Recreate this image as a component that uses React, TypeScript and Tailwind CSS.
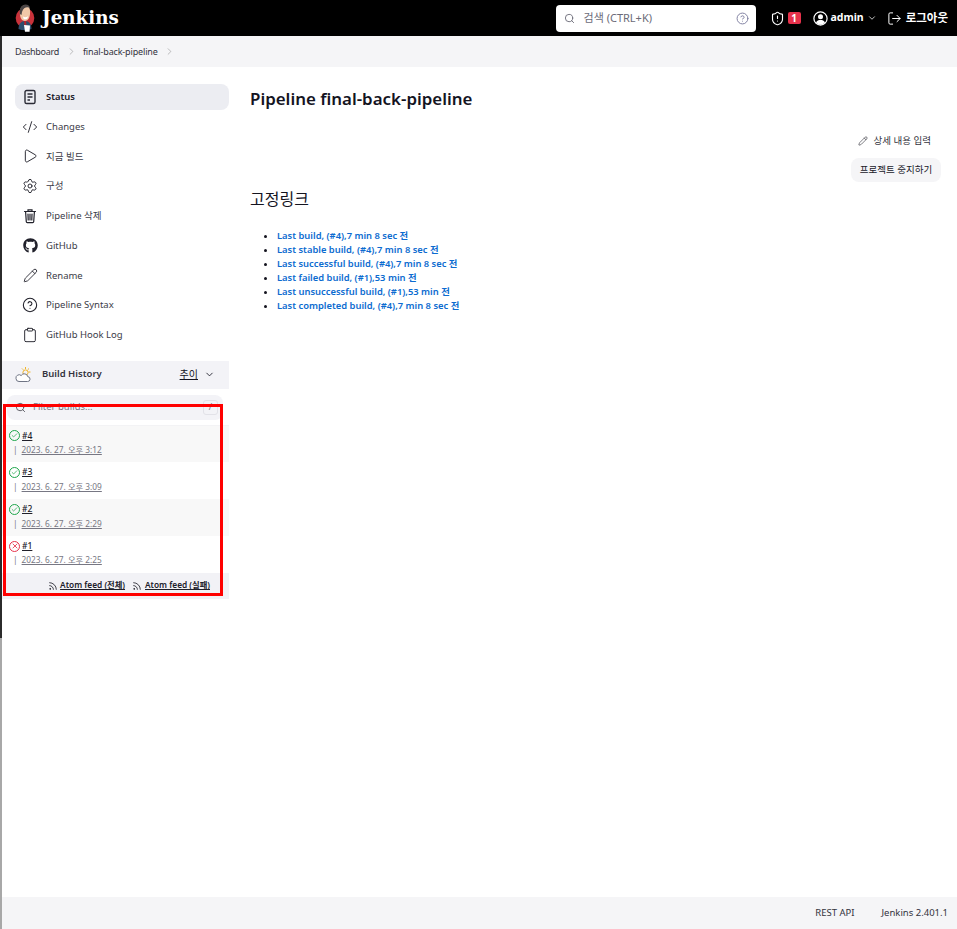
import React from "react";
import { Search, CircleHelp, ShieldAlert, ChevronDown, ChevronRight, LogOut, CodeXml, Play, Settings, Pencil, Clipboard, Rss, Check, X } from "lucide-react";
import { FaGithub } from "react-icons/fa";

const font = { fontFamily: '"Noto Sans", "Noto Sans CJK KR", sans-serif' };

function Logo() {
  return (
    <svg width="20" height="28" viewBox="0 0 20 28" className="shrink-0">
      <ellipse cx="10" cy="14" rx="9.3" ry="10" fill="#c8323a" />
      <path d="M5 11 C4 5 7 1 10.5 1 C14 1 15.5 5 15 10 C14.6 14 13 17 10 17 C7 17 5.4 14 5 11Z" fill="#f0c8a8" />
      <path d="M4.8 10 C4 4 7 .5 10.5 .5 C13 .5 14.8 2 15 4 C12 2.5 8.5 3.5 7 8 L6.5 11Z" fill="#4b4545" />
      <path d="M8 12.5 C9.5 13.6 11.5 13.4 13 12.2 L12.4 14.6 C11 15.6 9.4 15.4 8.4 14.4Z" fill="#fff" />
      <path d="M3.5 25 C3.5 20 6 17 10 17 C14 17 16.5 20 16.5 25 C13 26.6 7 26.6 3.5 25Z" fill="#2d4f6e" />
      <path d="M9 17 L11 17 L11.4 21 L9.6 22Z" fill="#b8242c" />
      <path d="M9 21 L15 21.5 L14.6 27.8 L10 27.8Z" fill="#ffffff" />
    </svg>
  );
}

function DocIcon() {
  return (
    <svg width="16" height="16" viewBox="0 0 16 16" fill="none" stroke="#2a2b36" strokeWidth="1.4">
      <rect x="3" y="1.5" width="10" height="13" rx="1.6" />
      <path d="M5.5 5h5M5.5 8h5M5.5 11h2.5" />
    </svg>
  );
}

function TrashIcon() {
  return (
    <svg width="16" height="16" viewBox="0 0 16 16" fill="none" stroke="#20202a" strokeWidth="1.2" strokeLinecap="round">
      <path d="M2.5 3.5h11M6 3.3V1.8h4v1.5M3.6 3.7l.7 10a1 1 0 0 0 1 .9h5.4a1 1 0 0 0 1-.9l.7-10M6 6l.2 6M8 6v6M10 6l-.2 6" />
    </svg>
  );
}

function UserIcon() {
  return (
    <svg width="15" height="15" viewBox="0 0 15 15" className="shrink-0">
      <circle cx="7.5" cy="7.5" r="6.6" fill="none" stroke="#fff" strokeWidth="1.2" />
      <circle cx="7.5" cy="5.8" r="2.5" fill="#fff" />
      <path d="M3 11.6 C4 9.6 5.6 9 7.5 9 C9.4 9 11 9.6 12 11.6 C10.8 13 9.2 13.7 7.5 13.7 C5.8 13.7 4.2 13 3 11.6Z" fill="#fff" />
    </svg>
  );
}

function Weather() {
  return (
    <svg width="17" height="17" viewBox="0 0 17 17" fill="none">
      <path d="M10.5 1v2M15.5 6h-2M14 2.5L12.6 3.9M7 2.5l1.2 1.2" stroke="#f0b429" strokeWidth="1" />
      <circle cx="10.5" cy="6.5" r="2.6" stroke="#f0b429" strokeWidth="1" />
      <path d="M4 15.5h8.5a2.4 2.4 0 0 0 .3-4.8 3.6 3.6 0 0 0-6.6-1.2A3.2 3.2 0 0 0 1 12.6 3 3 0 0 0 4 15.5Z" fill="#fff" stroke="#6f7484" strokeWidth="1" />
    </svg>
  );
}

const items: { label: string; icon: React.ReactNode }[] = [
  { label: "Changes", icon: <CodeXml size={16} strokeWidth={1.4} /> },
  { label: "지금 빌드", icon: <Play size={16} strokeWidth={1.4} /> },
  { label: "구성", icon: <Settings size={16} strokeWidth={1.4} /> },
  { label: "Pipeline 삭제", icon: <TrashIcon /> },
  { label: "GitHub", icon: <FaGithub size={15} /> },
  { label: "Rename", icon: <Pencil size={15} strokeWidth={1.4} /> },
  { label: "Pipeline Syntax", icon: <CircleHelp size={16} strokeWidth={1.6} /> },
  { label: "GitHub Hook Log", icon: <Clipboard size={16} strokeWidth={1.4} /> },
];

const builds = [
  { n: "#4", d: "2023. 6. 27. 오후 3:12", ok: true },
  { n: "#3", d: "2023. 6. 27. 오후 3:09", ok: true },
  { n: "#2", d: "2023. 6. 27. 오후 2:29", ok: true },
  { n: "#1", d: "2023. 6. 27. 오후 2:25", ok: false },
];

const links = [
  "Last build, (#4),7 min 8 sec 전",
  "Last stable build, (#4),7 min 8 sec 전",
  "Last successful build, (#4),7 min 8 sec 전",
  "Last failed build, (#1),53 min 전",
  "Last unsuccessful build, (#1),53 min 전",
  "Last completed build, (#4),7 min 8 sec 전",
];

export default function App() {
  return (
    <div style={font} className="relative flex flex-col w-full min-h-[929px] bg-white text-[#14141f]">
      <header className="h-9 bg-black text-white flex items-center pl-[15px] pr-[9px] shrink-0">
        <Logo />
        <span className="ml-[7px] text-[18.3px] font-bold leading-none" style={{ fontFamily: '"DejaVu Serif", serif' }}>Jenkins</span>
        <div className="ml-auto w-[200px] h-[27px] bg-white rounded-[4px] flex items-center pl-[8px] pr-[7px] text-[#6b6b78]">
          <Search size={11} strokeWidth={2} />
          <span className="ml-[9px] text-[11px]">검색 (CTRL+K)</span>
          <CircleHelp size={13} strokeWidth={1.8} className="ml-auto text-[#8080a0]" />
        </div>
        <ShieldAlert size={15} strokeWidth={1.8} className="ml-[14px]" />
        <span className="ml-[3px] w-[13px] h-[12px] bg-[#e6324b] rounded-[2px] text-[10px] font-bold flex items-center justify-center">1</span>
        <span className="ml-[12px] flex"><UserIcon /></span>
        <span className="ml-[3px] text-[10.5px] font-bold">admin</span>
        <ChevronDown size={10} strokeWidth={1.8} className="ml-[3px]" />
        <LogOut size={15} strokeWidth={1.6} className="ml-[10px]" />
        <span className="ml-[4px] text-[11.5px] font-bold">로그아웃</span>
      </header>

      <div className="flex flex-1">
        <div className="w-[2px] flex flex-col shrink-0">
          <div className="h-[602px] bg-[#2b2b2b]" />
          <div className="flex-1 bg-[#a8a8a8]" />
        </div>
        <div className="flex-1 flex flex-col min-w-0">
          <nav className="h-[31px] bg-[#f5f5f7] flex items-center pl-[13px] text-[9px] text-[#33333d]">
            <span className="tracking-[-0.3px]">Dashboard</span>
            <ChevronRight size={11} strokeWidth={1} className="ml-[7px] text-[#777]" />
            <span className="ml-[6px] tracking-[-0.15px]">final-back-pipeline</span>
            <ChevronRight size={11} strokeWidth={1} className="ml-[6px] text-[#777]" />
          </nav>

          <div className="flex flex-1">
            <aside className="w-[227px] shrink-0 pt-[17px]">
              <div className="ml-[13px] flex flex-col gap-[3.7px]">
                <div className="h-[26px] bg-[#ecedf2] rounded-[8px] flex items-center pl-[7px] text-[9.4px] font-semibold">
                  <span className="w-[16px] flex justify-center"><DocIcon /></span>
                  <span className="ml-[8px] mt-[1px]">Status</span>
                </div>
                {items.map((it) => (
                  <div key={it.label} className="h-[26px] flex items-center pl-[7px] text-[9.5px] text-[#3b3b47]">
                    <span className="w-[16px] flex justify-center text-[#20202a]">{it.icon}</span>
                    <span className="ml-[8px] mt-[1px]">{it.label}</span>
                  </div>
                ))}
              </div>

              <div className="mt-[13px] h-[28px] bg-[#f3f3f7] flex items-center pl-[13px] pr-[14px] text-[9.5px]">
                <Weather />
                <span className="ml-[10px] font-semibold text-[#33333d]">Build History</span>
                <span className="ml-auto underline text-[10px]">추이</span>
                <ChevronDown size={11} strokeWidth={1.8} className="ml-[6px]" />
              </div>

              <div className="ml-[5px] mr-[6px] mt-[6px] h-[25px] bg-[#f3f3f7] rounded-[8px] flex items-center pl-[8px] pr-[5px] text-[9.5px] text-[#777783]">
                <Search size={11} strokeWidth={1.6} className="text-[#33333d]" />
                <span className="ml-[7px] pt-[1px]">Filter builds...</span>
                <span className="ml-auto w-[15px] h-[15px] border border-[#e2e2e8] rounded-[3px] flex items-center justify-center text-[9px]">/</span>
              </div>

              <div className="mt-[5px] border-t border-[#f3f3f5]">
                {builds.map((b, i) => (
                  <div key={b.n} className={`h-[36.75px] pl-[7px] pb-[1px] flex flex-col justify-center ${i % 2 === 0 ? "bg-[#f8f8f8]" : "bg-white"}`}>
                    <div className="flex items-center h-[14px]">
                      <span className={`w-[11px] h-[11px] rounded-full border flex items-center justify-center ${b.ok ? "border-[#1ea64b] text-[#1ea64b]" : "border-[#e6324b] text-[#e6324b]"}`}>
                        {b.ok ? <Check size={7} strokeWidth={2.5} /> : <X size={8} strokeWidth={2.5} />}
                      </span>
                      <span className="ml-[2px] text-[8.5px] font-medium underline text-[#20202a]">{b.n}</span>
                    </div>
                    <div className="flex items-center h-[15px] text-[8.3px] text-[#777783]">
                      <span className="ml-[4px]">|</span>
                      <span className="ml-[4px] underline">{b.d}</span>
                    </div>
                  </div>
                ))}
              </div>

              <div className="h-[26px] bg-[#f2f2f6] flex items-center justify-end pr-[19px] text-[8.3px] font-semibold text-[#20202a]">
                <Rss size={10} strokeWidth={2} />
                <span className="ml-[2px] underline">Atom feed (전체)</span>
                <Rss size={10} strokeWidth={2} className="ml-[7px]" />
                <span className="ml-[3px] underline">Atom feed (실패)</span>
              </div>
            </aside>

            <main className="flex-1 min-w-0 pl-[21px] pr-[16px] pt-[20px]">
              <h1 className="text-[16.9px] font-semibold leading-[24px] text-[#14141f]">Pipeline final-back-pipeline</h1>
              <div className="mt-[18px] flex flex-col items-end">
                <div className="flex items-center h-[24px] pr-[10px] text-[9.5px] text-[#33333d]">
                  <Pencil size={10} strokeWidth={1.5} />
                  <span className="ml-[6px]">상세 내용 입력</span>
                </div>
                <div className="mt-[5px] h-[24px] w-[90px] bg-[#f5f5f7] rounded-[8px] flex items-center justify-center text-[9.5px] text-[#20202a]">프로젝트 중지하기</div>
              </div>
              <h2 className="mt-[5px] text-[16px] leading-[24px] text-[#14141f]">고정링크</h2>
              <ul className="mt-[18px] list-disc pl-[27px] text-[9.4px] leading-[14px] font-semibold marker:text-[#14141f]">
                {links.map((l) => (
                  <li key={l} className="text-[#0b6bd0]">{l}</li>
                ))}
              </ul>
            </main>
          </div>

          <footer className="h-[32px] bg-[#f5f5f7] flex items-center justify-end pr-[9px] text-[9.5px] text-[#33333d]">
            <span>REST API</span>
            <span className="ml-[27px]">Jenkins 2.401.1</span>
          </footer>
        </div>
      </div>

      <div className="absolute left-[3px] top-[404px] w-[220px] h-[192px] border-[3px] border-[#ff0000] pointer-events-none" />
    </div>
  );
}
